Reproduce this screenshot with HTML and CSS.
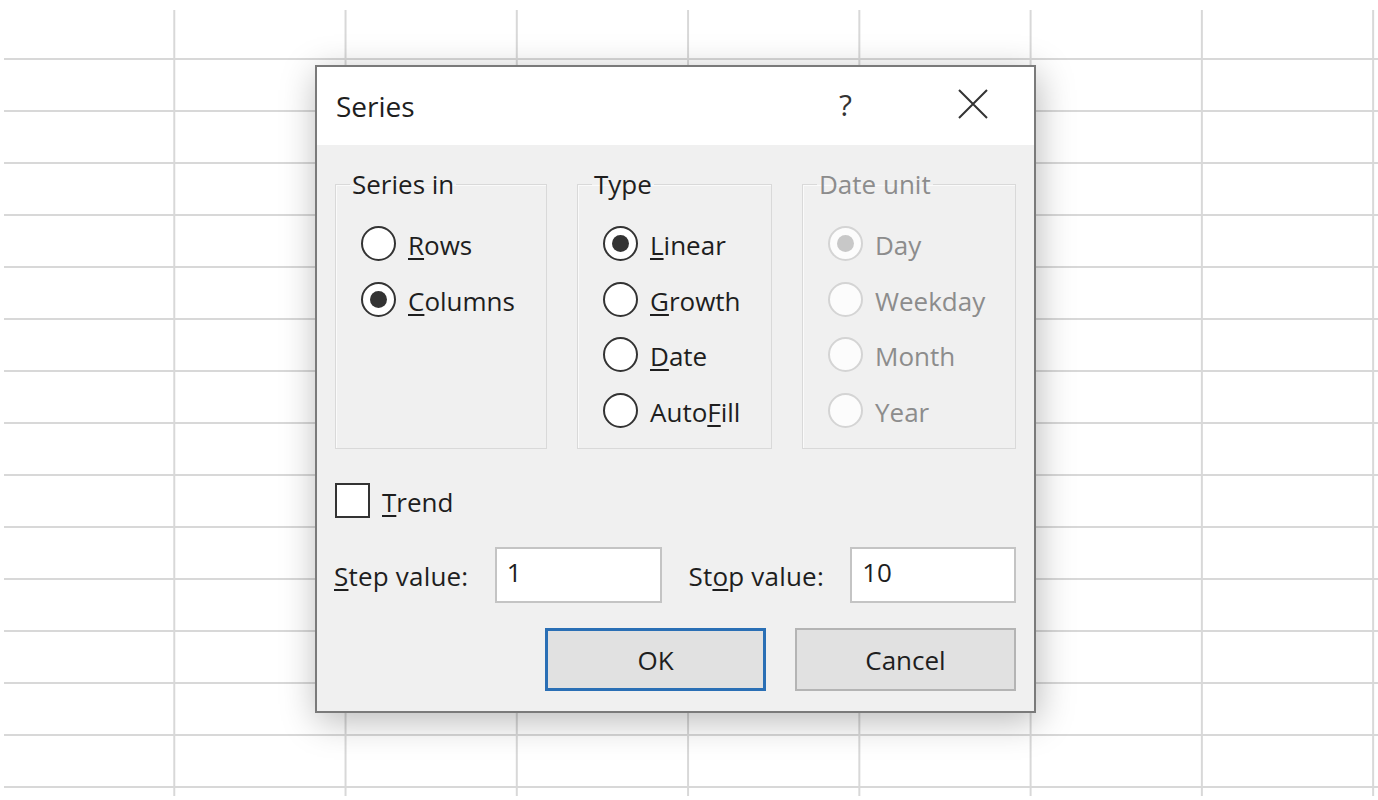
FILE: index.html
```html
<!DOCTYPE html>
<html>
<head>
<meta charset="utf-8">
<title>Series</title>
<link rel="stylesheet" href="styles.css">
</head>
<body>
<div class="sheet"></div>
<div class="dialog">
  <div class="titlebar">
    <div class="title">Series</div>
    <div class="help">?</div>
    <div class="close">
      <svg width="32" height="32" viewBox="0 0 32 32"><path d="M2 2 L30 30 M30 2 L2 30" stroke="#333" stroke-width="2" fill="none"/></svg>
    </div>
  </div>
  <div class="body">
    <div class="groups">
      <fieldset class="group g1">
        <legend>Series in</legend>
        <div class="opts">
          <div class="opt"><span class="radio"></span><span class="lbl"><u>R</u>ows</span></div>
          <div class="opt"><span class="radio on"></span><span class="lbl"><u>C</u>olumns</span></div>
        </div>
      </fieldset>
      <fieldset class="group g2">
        <legend>Type</legend>
        <div class="opts">
          <div class="opt"><span class="radio on"></span><span class="lbl"><u>L</u>inear</span></div>
          <div class="opt"><span class="radio"></span><span class="lbl"><u>G</u>rowth</span></div>
          <div class="opt"><span class="radio"></span><span class="lbl"><u>D</u>ate</span></div>
          <div class="opt"><span class="radio"></span><span class="lbl">Auto<u>F</u>ill</span></div>
        </div>
      </fieldset>
      <fieldset class="group g3 disabled">
        <legend>Date unit</legend>
        <div class="opts">
          <div class="opt"><span class="radio on"></span><span class="lbl">Day</span></div>
          <div class="opt"><span class="radio"></span><span class="lbl">Weekday</span></div>
          <div class="opt"><span class="radio"></span><span class="lbl">Month</span></div>
          <div class="opt"><span class="radio"></span><span class="lbl">Year</span></div>
        </div>
      </fieldset>
    </div>
    <div class="trend"><span class="check"></span><span class="lbl"><u>T</u>rend</span></div>
    <div class="values">
      <span class="vlabel l1"><u>S</u>tep value:</span>
      <span class="field f1">1</span>
      <span class="vlabel l2">St<u>o</u>p value:</span>
      <span class="field f2">10</span>
    </div>
    <div class="buttons">
      <div class="btn ok">OK</div>
      <div class="btn cancel">Cancel</div>
    </div>
  </div>
</div>
</body>
</html>
```
FILE: styles.css
```css
html, body {
  margin: 0;
  padding: 0;
  background: #ffffff;
}
body {
  position: relative;
  width: 1378px;
  height: 800px;
  overflow: hidden;
  font-family: "Open Sans", "Noto Sans", sans-serif;
  color: #1e1e1e;
}
.sheet {
  margin: 10px 0 0 4px;
  width: 1374px;
  height: 786px;
  background-image:
    linear-gradient(to right, transparent 0, transparent 169.28px, #d8d8d8 169.28px, #d8d8d8 171.28px),
    linear-gradient(to bottom, #d8d8d8 0, #d8d8d8 2px, transparent 2px);
  background-size: 171.28px 100%, 100% 52px;
  background-position: 0 0, 0 48px;
}
.dialog {
  position: absolute;
  left: 315px;
  top: 65px;
  width: 721px;
  height: 648px;
  box-sizing: border-box;
  border: 2px solid #7a7a7a;
  background: #f0f0f0;
  box-shadow: 2px 8px 34px rgba(0, 0, 0, 0.28);
  display: flex;
  flex-direction: column;
}
.titlebar {
  height: 78px;
  background: #ffffff;
  display: flex;
  align-items: center;
  flex-shrink: 0;
}
.title {
  margin-left: 19px;
  font-size: 28px;
  flex: 1;
}
.help {
  font-size: 30px;
  width: 20px;
  margin-right: 98px;
  padding-bottom: 4px;
  color: #333;
}
.close {
  width: 32px;
  height: 32px;
  margin-right: 45px;
  margin-top: -4px;
}
.close svg { display: block; }
.body {
  flex: 1;
  padding: 20px 18px 20px 18px;
  display: flex;
  flex-direction: column;
}
.groups {
  display: flex;
  gap: 30px;
}
.group {
  margin: 0;
  padding: 0 0 10px 0;
  border: 1px solid #d9d9d9;
  box-shadow: inset 1px 1px 0 #fafafa;
  min-width: 0;
  box-sizing: border-box;
}
.g1 { width: 212px; }
.g2 { width: 195px; }
.g3 { width: 214px; }
.group legend {
  font-size: 26px;
  line-height: 38px;
  margin-left: 14px;
  padding: 0 2px;
}
.opts {
  padding: 13px 0 0 25px;
  display: flex;
  flex-direction: column;
}
.opt {
  height: 55.6px;
  display: flex;
  align-items: center;
}
.radio {
  width: 35px;
  height: 35px;
  box-sizing: border-box;
  border: 2px solid #333333;
  border-radius: 50%;
  background: #ffffff;
  display: flex;
  align-items: center;
  justify-content: center;
  flex-shrink: 0;
}
.radio.on::after {
  content: "";
  width: 17px;
  height: 17px;
  border-radius: 50%;
  background: #333333;
}
.lbl {
  font-size: 26px;
  margin-left: 12px;
  padding-top: 3px;
}
u {
  text-decoration-thickness: 2px;
  text-underline-offset: 3px;
}
.disabled legend,
.disabled .lbl {
  color: #8c8c8c;
}
.disabled .radio {
  border-color: #d4d4d4;
  background: #fcfcfc;
}
.disabled .radio.on::after {
  background: #c8c8c8;
}
.trend {
  margin-top: 34px;
  height: 35px;
  display: flex;
  align-items: center;
}
.check {
  width: 35px;
  height: 35px;
  box-sizing: border-box;
  border: 2px solid #333333;
  background: #ffffff;
  flex-shrink: 0;
}
.trend .lbl { margin-left: 12px; }
.values {
  margin-top: 29px;
  display: flex;
  align-items: center;
  height: 56px;
}
.vlabel {
  font-size: 26px;
  padding-top: 2px;
  letter-spacing: 0.2px;
}
.l1 { width: 161px; margin-left: -1px; }
.l2 { width: 162px; margin-left: 27px; }
.field {
  height: 56px;
  box-sizing: border-box;
  border: 2px solid #c4c4c4;
  background: #ffffff;
  font-size: 26px;
  line-height: 46px;
  padding-left: 10px;
}
.f1 { width: 167px; }
.f2 { width: 166px; }
.buttons {
  margin-top: 25px;
  display: flex;
  justify-content: flex-end;
  gap: 29px;
}
.btn {
  height: 63px;
  width: 221px;
  box-sizing: border-box;
  background: #e1e1e1;
  display: flex;
  align-items: center;
  justify-content: center;
  font-size: 26px;
}
.ok {
  border: 3px solid #2a6fb5;
}
.cancel {
  border: 2px solid #b4b4b4;
}
```
